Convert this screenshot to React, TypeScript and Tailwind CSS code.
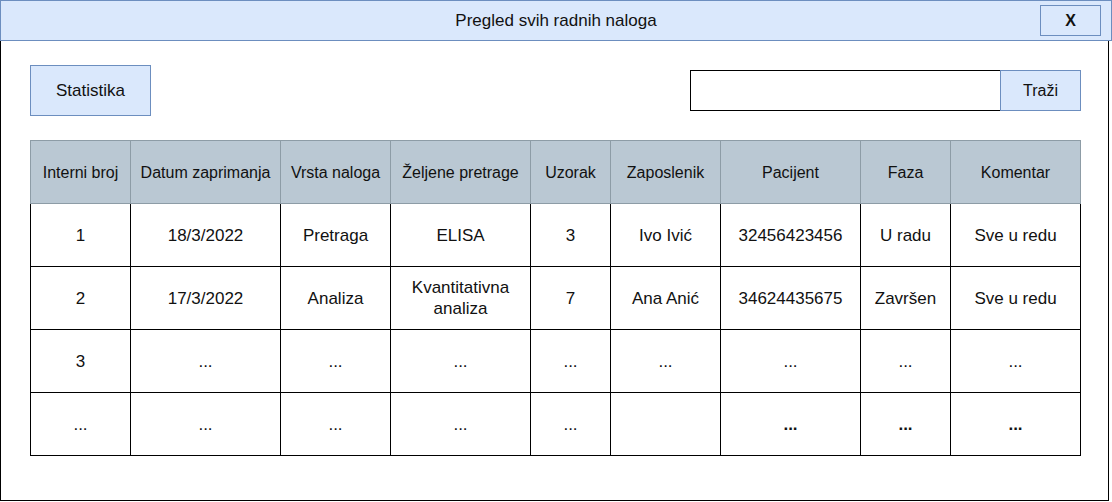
import React from "react";

const cols = [
  "Interni broj",
  "Datum zaprimanja",
  "Vrsta naloga",
  "Željene pretrage",
  "Uzorak",
  "Zaposlenik",
  "Pacijent",
  "Faza",
  "Komentar",
];

type Cell = { t: string; bold?: boolean };

const rows: Cell[][] = [
  [
    { t: "1" },
    { t: "18/3/2022" },
    { t: "Pretraga" },
    { t: "ELISA" },
    { t: "3" },
    { t: "Ivo Ivić" },
    { t: "32456423456" },
    { t: "U radu" },
    { t: "Sve u redu" },
  ],
  [
    { t: "2" },
    { t: "17/3/2022" },
    { t: "Analiza" },
    { t: "Kvantitativna analiza" },
    { t: "7" },
    { t: "Ana Anić" },
    { t: "34624435675" },
    { t: "Završen" },
    { t: "Sve u redu" },
  ],
  [
    { t: "3" },
    { t: "..." },
    { t: "..." },
    { t: "..." },
    { t: "..." },
    { t: "..." },
    { t: "..." },
    { t: "..." },
    { t: "..." },
  ],
  [
    { t: "..." },
    { t: "..." },
    { t: "..." },
    { t: "..." },
    { t: "..." },
    { t: "" },
    { t: "...", bold: true },
    { t: "...", bold: true },
    { t: "...", bold: true },
  ],
];

export default function App() {
  return (
    <div
      className="w-[1112px] h-[502px] bg-white text-[#111]"
      style={{ fontFamily: '"Liberation Sans", Arial, sans-serif' }}
    >
      <div className="grid grid-cols-[1fr_auto_1fr] items-center h-[41px] w-[1112px] border border-[#6c8ebf] bg-[#dae8fc]">
        <div />
        <div className="text-[17px] leading-none">Pregled svih radnih naloga</div>
        <div className="flex justify-end pr-[10px]">
          <div className="w-[61px] h-[31px] border border-[#6c8ebf] bg-[#dae8fc] flex items-center justify-center font-bold text-[16px]">
            X
          </div>
        </div>
      </div>
      <div className="w-[1109px] h-[460px] border-l border-r border-b border-black pt-[24px] pl-[29px]">
        <div className="flex justify-between items-start w-[1051px]">
          <div className="w-[121px] h-[51px] border border-[#6c8ebf] bg-[#dae8fc] flex items-center justify-center text-[17px]">
            Statistika
          </div>
          <div className="flex mt-[5px]">
            <div className="w-[310px] h-[41px] border border-black border-r-0 bg-white" />
            <div className="w-[81px] h-[41px] border border-[#6c8ebf] bg-[#dae8fc] flex items-center justify-center text-[16px]">
              Traži
            </div>
          </div>
        </div>
        <div className="mt-[24px] grid grid-cols-[101px_150px_110px_140px_80px_110px_140px_90px_130px] leading-[21px]">
          {cols.map((c, i) => (
            <div
              key={c}
              className={`h-[64px] border-t border-r border-b border-[#8d9ca6] bg-[#bac8d3] flex items-center justify-center text-center text-[16px] ${
                i === 0 ? "border-l" : ""
              }`}
            >
              {c}
            </div>
          ))}
          {rows.map((r, ri) =>
            r.map((c, ci) => (
              <div
                key={`${ri}-${ci}`}
                className={`h-[63px] border-r border-b border-black flex items-center justify-center text-center text-[17px] px-[4px] ${
                  ci === 0 ? "border-l" : ""
                } ${c.bold ? "font-bold" : ""}`}
              >
                {c.t}
              </div>
            ))
          )}
        </div>
      </div>
    </div>
  );
}
